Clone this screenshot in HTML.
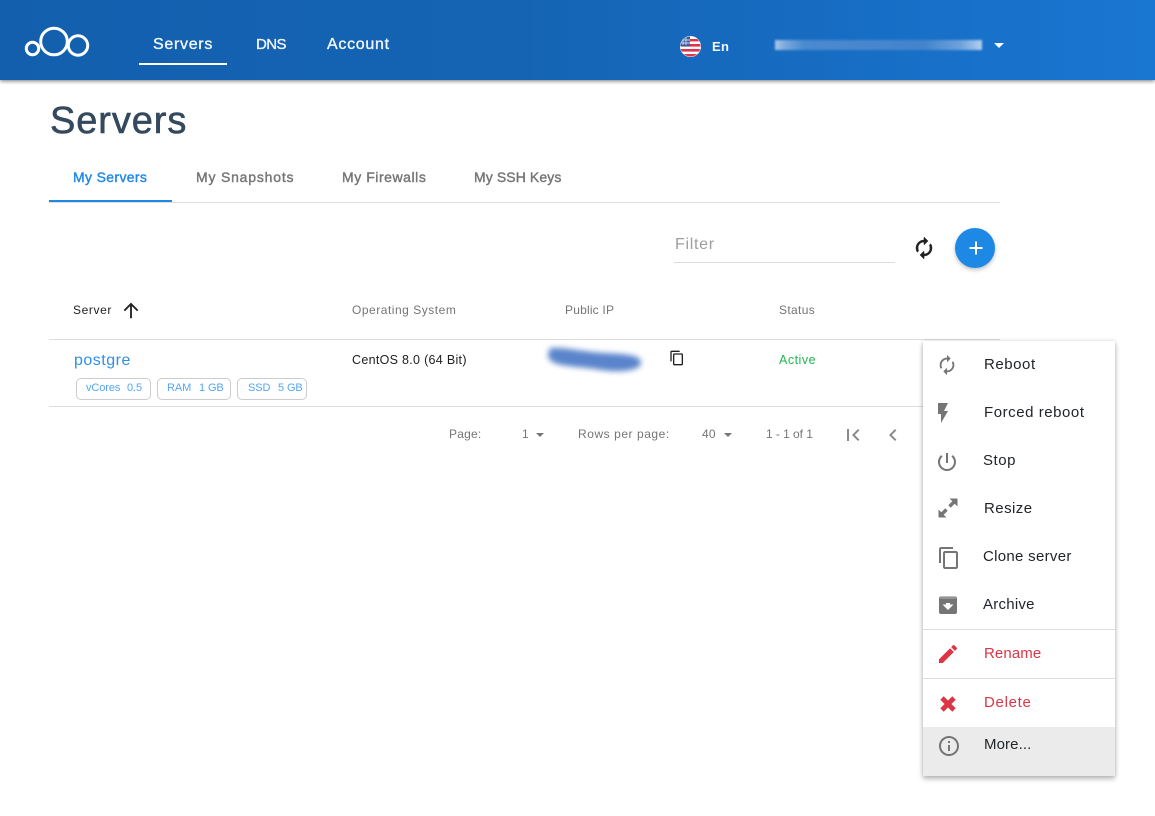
<!DOCTYPE html>
<html lang="en"><head><meta charset="utf-8"><title>Servers</title>
<style>
html,body{margin:0;padding:0;background:#fff}
body{width:1155px;height:816px;position:relative;overflow:hidden;font-family:"Liberation Sans",Arial,sans-serif}
.t{position:absolute;white-space:nowrap;line-height:20px}
.a{position:absolute}
svg{position:absolute;display:block}
.m{font-size:15px;letter-spacing:.55px;color:#212529}
.r{color:#dc3545}
.h{font-size:12px;color:#757575;letter-spacing:.2px}
.p{font-size:12px;color:#757575;letter-spacing:.2px}
.nav{font-size:16px;font-weight:400;color:#f2f6fb;letter-spacing:.7px;-webkit-text-stroke:.35px #f2f6fb}
.tab{font-size:14px;font-weight:400;color:#757575;letter-spacing:.45px;-webkit-text-stroke:.4px #757575}
.chip{position:absolute;top:378px;height:22px;border:1px solid #ccc;border-radius:5px;box-sizing:border-box;background:#fff}
.chip span{position:absolute;top:0;line-height:19px;font-size:11px;color:#54a6f3;white-space:nowrap;letter-spacing:-.1px}
.hr{position:absolute;height:1px;background:#ddd}
</style></head><body>
<div class="a" style="left:0;top:0;width:1155px;height:80px;background:linear-gradient(90deg,#135fae 0%,#1564b4 45%,#1976d2 100%);box-shadow:0 1px 4px rgba(0,0,0,.55)"></div>
<svg style="left:24px;top:26px" width="66" height="33" viewBox="0 0 66 33"><g fill="none" stroke="#fff" stroke-width="3"><circle cx="8.500" cy="22.500" r="6.200"/><circle cx="30" cy="15.500" r="13.300"/><circle cx="54" cy="19.500" r="9.700"/></g></svg>
<div class="t nav" style="left:153px;top:35px">Servers</div>
<div class="a" style="left:139px;top:63px;width:88px;height:2px;background:#fff"></div>
<div class="t nav" style="left:256px;top:35px;font-size:15px;letter-spacing:-.6px">DNS</div>
<div class="t nav" style="left:327px;top:35px">Account</div>
<svg style="left:680px;top:36px" width="21" height="21" viewBox="0 0 21 21"><defs><clipPath id="c"><circle cx="10.500" cy="10.500" r="10"/></clipPath></defs><circle cx="10.500" cy="10.500" r="10.500" fill="#fff"/><g clip-path="url(#c)"><rect width="21" height="21" fill="#fff"/><rect y="8" width="21" height="2.600" fill="#e0344a"/><rect y="13" width="21" height="2.600" fill="#e0344a"/><rect y="18" width="21" height="3" fill="#e0344a"/><rect y="3" x="10" width="11" height="2.400" fill="#e0344a"/><rect width="10" height="10.500" fill="#3d5c9e"/><path d="M3 2v7M6 2v7M1 4h9M1 7h9" stroke="#cfd8ea" stroke-width=".9"/></g></svg>
<div class="t" style="left:712px;top:37px;font-size:13px;color:#f2f6fb;letter-spacing:.3px;font-weight:700">En</div>
<div class="a" style="left:775px;top:40px;width:207px;height:10px;background:linear-gradient(90deg,#a9c8e8 0,#7aa8dc 5%,#4c8ad0 14%,#4484cd 72%,#6fa3dc 90%,#b4cfee 100%);filter:blur(1px)"></div>
<div class="a" style="left:994px;top:43px;border-left:5px solid transparent;border-right:5px solid transparent;border-top:5px solid #fff"></div>

<div class="t" style="left:50px;top:100px;font-size:38px;line-height:42px;color:#34495e;font-weight:400;letter-spacing:.9px;-webkit-text-stroke:.6px #34495e">Servers</div>
<div class="t tab" style="left:73px;top:167px;color:#2189e8;-webkit-text-stroke-color:#2189e8;letter-spacing:.35px">My Servers</div>
<div class="t tab" style="left:196px;top:167px;letter-spacing:.8px">My Snapshots</div>
<div class="t tab" style="left:342px;top:167px;letter-spacing:.55px">My Firewalls</div>
<div class="t tab" style="left:474px;top:167px;letter-spacing:.1px">My SSH Keys</div>
<div class="hr" style="left:49px;top:202px;width:951px"></div>
<div class="a" style="left:49px;top:200px;width:123px;height:2px;background:#1e88e5"></div>

<div class="t" style="left:675px;top:235px;font-size:16px;color:#9e9e9e;letter-spacing:.7px">Filter</div>
<div class="hr" style="left:674px;top:262px;width:221px"></div>
<svg style="left:912px;top:236px" width="24" height="24" viewBox="0 0 24 24"><path fill="#212121" stroke="#212121" stroke-width=".5" d="M12 6v3l4-4-4-4v3c-4.42 0-8 3.58-8 8 0 1.57.46 3.03 1.24 4.26L6.700 14.800c-.45-.83-.7-1.79-.7-2.800 0-3.31 2.690-6 6-6zm6.760 1.740L17.300 9.200c.44.84.7 1.790.7 2.800 0 3.310-2.690 6-6 6v-3l-4 4 4 4v-3c4.420 0 8-3.580 8-8 0-1.570-.46-3.030-1.240-4.260z"/></svg>
<div class="a" style="left:955px;top:228px;width:40px;height:40px;border-radius:50%;background:#1e88e5;box-shadow:0 2px 4px rgba(0,0,0,.25)"></div>
<svg style="left:968px;top:240px" width="16" height="16" viewBox="0 0 16 16"><path d="M8 1.500v13M1.500 8h13" stroke="#fff" stroke-width="2"/></svg>

<div class="t" style="left:73px;top:300px;font-size:12px;color:#212121;letter-spacing:.6px">Server</div>
<svg style="left:120px;top:299px" width="22" height="22" viewBox="0 0 24 24"><path fill="#212121" d="M4 12l1.410 1.410L11 7.830V21h2V7.830l5.580 5.590L20 12l-8-8-8 8z"/></svg>
<div class="t h" style="left:352px;top:300px;letter-spacing:.52px">Operating System</div>
<div class="t h" style="left:565px;top:300px">Public IP</div>
<div class="t h" style="left:779px;top:300px;letter-spacing:.35px">Status</div>
<div class="hr" style="left:49px;top:339px;width:951px"></div>
<div class="t" style="left:74px;top:351px;font-size:16px;color:#2e8fe8;letter-spacing:.5px">postgre</div>
<div class="chip" style="left:76px;width:75px"><span style="left:9px">vCores</span><span style="left:50px">0.5</span></div>
<div class="chip" style="left:157px;width:74px"><span style="left:9px">RAM</span><span style="left:41px">1 GB</span></div>
<div class="chip" style="left:237px;width:70px"><span style="left:10px">SSD</span><span style="left:40px">5 GB</span></div>
<div class="t" style="left:352px;top:350px;font-size:12.5px;color:#212121;letter-spacing:.3px">CentOS 8.0 (64 Bit)</div>
<svg style="left:535px;top:335px" width="120" height="50" viewBox="0 0 120 50"><path d="M15 13 C30 12 50 17 70 18 C85 19 105 19 106 27 C107 37 80 38 60 34 C40 31 13 32 13 20Z" fill="#5a84cb" style="filter:blur(3px)"/></svg>
<svg style="left:669px;top:350px" width="16" height="16" viewBox="0 0 24 24"><path fill="#212121" d="M16 1H4c-1.100 0-2 .9-2 2v14h2V3h12V1zm3 4H8c-1.100 0-2 .9-2 2v14c0 1.100.9 2 2 2h11c1.100 0 2-.9 2-2V7c0-1.100-.9-2-2-2zm0 16H8V7h11v14z"/></svg>
<div class="t" style="left:779px;top:350px;font-size:12.5px;color:#1fb84f;letter-spacing:.5px">Active</div>
<div class="hr" style="left:49px;top:406px;width:951px"></div>

<div class="t p" style="left:449px;top:424px">Page:</div>
<div class="t p" style="left:522px;top:424px">1</div>
<div class="a" style="left:536px;top:433px;border-left:4px solid transparent;border-right:4px solid transparent;border-top:4px solid #757575"></div>
<div class="t p" style="left:578px;top:424px;letter-spacing:.55px">Rows per page:</div>
<div class="t p" style="left:702px;top:424px">40</div>
<div class="a" style="left:724px;top:433px;border-left:4px solid transparent;border-right:4px solid transparent;border-top:4px solid #757575"></div>
<div class="t p" style="left:766px;top:424px;letter-spacing:-.05px">1 - 1 of 1</div>
<svg style="left:841px;top:423px" width="24" height="24" viewBox="0 0 24 24"><path fill="#8a8a8a" d="M18.410 16.590L13.820 12l4.590-4.590L17 6l-6 6 6 6zM6 6h2v12H6z"/></svg>
<svg style="left:881px;top:423px" width="24" height="24" viewBox="0 0 24 24"><path fill="#8a8a8a" d="M15.410 7.410L14 6l-6 6 6 6 1.410-1.410L10.830 12z"/></svg>

<div class="a" style="left:923px;top:341px;width:192px;height:435px;background:#fff;box-shadow:0 3px 5px rgba(0,0,0,.25),0 0 4px rgba(0,0,0,.14)"></div>
<div class="a" style="left:923px;top:727px;width:192px;height:49px;background:#ebebeb"></div>
<div class="hr" style="left:923px;top:629px;width:192px"></div>
<div class="hr" style="left:923px;top:678px;width:192px"></div>

<svg style="left:936px;top:354px" width="22" height="22" viewBox="0 0 24 24"><path fill="#757575" d="M12 6v3l4-4-4-4v3c-4.420 0-8 3.580-8 8 0 1.570.46 3.030 1.240 4.260L6.700 14.800c-.45-.83-.7-1.790-.7-2.800 0-3.310 2.690-6 6-6zm6.760 1.740L17.300 9.200c.44.84.7 1.790.7 2.800 0 3.310-2.690 6-6 6v-3l-4 4 4 4v-3c4.420 0 8-3.580 8-8 0-1.570-.46-3.030-1.240-4.260z"/></svg>
<div class="t m" style="left:984px;top:355px">Reboot</div>
<svg style="left:931px;top:401px" width="24" height="24" viewBox="0 0 24 24"><path fill="#757575" d="M7 2v11h3v9l7-12h-4l4-8z"/></svg>
<div class="t m" style="left:984px;top:403px">Forced reboot</div>
<svg style="left:935px;top:450px" width="24" height="24" viewBox="0 0 24 24"><path fill="#757575" d="M13 3h-2v10h2V3zm4.830 2.170l-1.420 1.420C17.990 7.860 19 9.810 19 12c0 3.870-3.130 7-7 7s-7-3.130-7-7c0-2.190 1.010-4.140 2.580-5.420L6.170 5.170C4.230 6.820 3 9.260 3 12c0 4.970 4.030 9 9 9s9-4.030 9-9c0-2.740-1.230-5.180-3.170-6.830z"/></svg>
<div class="t m" style="left:983px;top:451px">Stop</div>
<svg style="left:936px;top:496px" width="24" height="24" viewBox="0 0 24 24"><path fill="#757575" d="M13.500 2.500h8v8l-2.800-2.800-4 4-2.400-2.400 4-4zM10.500 21.500h-8v-8l2.800 2.800 4-4 2.400 2.400-4 4z"/></svg>
<div class="t m" style="left:984px;top:499px;letter-spacing:.45px">Resize</div>
<svg style="left:937px;top:546px" width="24" height="24" viewBox="0 0 24 24"><path fill="#757575" d="M16 1H4c-1.100 0-2 .9-2 2v14h2V3h12V1zm3 4H8c-1.100 0-2 .9-2 2v14c0 1.100.9 2 2 2h11c1.100 0 2-.9 2-2V7c0-1.100-.9-2-2-2zm0 16H8V7h11v14z"/></svg>
<div class="t m" style="left:983px;top:547px;letter-spacing:.3px">Clone server</div>
<svg style="left:936px;top:593px" width="24" height="24" viewBox="0 0 24 24"><rect x="3" y="3.500" width="18" height="17.500" rx="2" fill="#757575"/><path d="M4 5h16" stroke="#b5b5b5" stroke-width="1"/><path d="M6.500 11.500H10V10h4v1.500h3.500L12 17z" fill="#fff"/></svg>
<div class="t m" style="left:983px;top:595px;letter-spacing:.25px">Archive</div>
<svg style="left:936px;top:642px" width="24" height="24" viewBox="0 0 24 24"><path fill="#dc3545" d="M3 17.250V21h3.750L17.810 9.940l-3.750-3.750L3 17.250zM20.710 7.040c.39-.39.39-1.020 0-1.410l-2.340-2.340c-.39-.39-1.020-.39-1.410 0l-1.830 1.830 3.750 3.750 1.830-1.830z"/></svg>
<div class="t m r" style="left:984px;top:644px;letter-spacing:.1px">Rename</div>
<svg style="left:936px;top:692px" width="24" height="24" viewBox="0 0 24 24"><path d="M6 6l12 12M18 6L6 18" stroke="#dc3545" stroke-width="4.800" fill="none"/></svg>
<div class="t m r" style="left:984px;top:693px;letter-spacing:.7px">Delete</div>
<svg style="left:937px;top:734px" width="24" height="24" viewBox="0 0 24 24"><path fill="#757575" d="M11 17h2v-6h-2v6zm1-15C6.480 2 2 6.480 2 12s4.480 10 10 10 10-4.480 10-10S17.520 2 12 2zm0 18c-4.410 0-8-3.590-8-8s3.590-8 8-8 8 3.590 8 8-3.590 8-8 8zM11 9h2V7h-2v2z"/></svg>
<div class="t m" style="left:984px;top:735px;letter-spacing:.1px">More...</div>
</body></html>
